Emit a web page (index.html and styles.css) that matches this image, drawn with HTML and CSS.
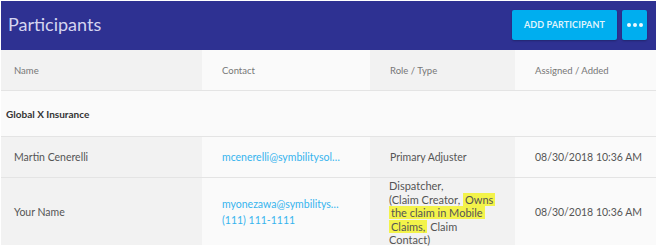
FILE: index.html
```html
<!DOCTYPE html>
<html lang="en">
<head>
    <meta charset="UTF-8">
    <title>Participants</title>
    <link rel="stylesheet" href="styles.css">
</head>
<body>
    <div class="panel">
        <div class="panel-header">
            <h1>Participants</h1>
            <div class="actions">
                <button class="btn-add">ADD PARTICIPANT</button>
                <button class="btn-more"><span></span><span></span><span></span></button>
            </div>
        </div>

        <div class="row head">
            <div class="cell c-name">Name</div>
            <div class="cell c-contact">Contact</div>
            <div class="cell c-role">Role / Type</div>
            <div class="cell c-date">Assigned / Added</div>
        </div>

        <div class="group">Global X Insurance</div>

        <div class="row">
            <div class="cell c-name">Martin Cenerelli</div>
            <div class="cell c-contact"><a class="link">mcenerelli@symbilitysolutions.com</a></div>
            <div class="cell c-role">Primary Adjuster</div>
            <div class="cell c-date">08/30/2018 10:36 AM</div>
        </div>

        <div class="row tall">
            <div class="cell c-name">Your Name</div>
            <div class="cell c-contact">
                <a class="link">myonezawa@symbilitysolutions.com</a>
                <a class="link">(111) 111-1111</a>
            </div>
            <div class="cell c-role">Dispatcher,<br>(Claim Creator, <mark>Owns the claim in Mobile Claims,</mark> Claim Contact)</div>
            <div class="cell c-date">08/30/2018 10:36 AM</div>
        </div>
    </div>
</body>
</html>
```

FILE: styles.css
```css
* {
    margin: 0;
    padding: 0;
    box-sizing: border-box;
}

body {
    font-family: 'Lato', 'Open Sans', sans-serif;
    background: #fff;
    color: #555;
    width: 658px;
    height: 250px;
    overflow: hidden;
}

.panel {
    margin: 1px 2px 0 1px;
    background: #fafafa;
}

.panel-header {
    background: #2e3192;
    height: 49px;
    display: flex;
    justify-content: space-between;
    align-items: center;
    padding: 0 9px 0 7px;
}

.panel-header h1 {
    font-size: 18px;
    font-weight: 400;
    color: #d4d5f0;
    margin-top: -3px;
}

.actions {
    display: flex;
    gap: 5px;
    margin-top: -2px;
}

.btn-add,
.btn-more {
    background: #00aeef;
    border: none;
    border-radius: 2px;
    height: 30px;
    color: #dff3fc;
    font-family: inherit;
    box-shadow: 0 1px 2px rgba(0, 0, 0, 0.25);
}

.btn-add {
    width: 105px;
    font-size: 9px;
    font-weight: 700;
    letter-spacing: 0.1px;
}

.btn-more {
    width: 25px;
    display: flex;
    justify-content: center;
    align-items: center;
    gap: 2px;
}

.btn-more span {
    width: 4px;
    height: 4px;
    border-radius: 50%;
    background: #eef9fe;
}

.row {
    display: grid;
    grid-template-columns: 201px 168px 145px 1fr;
    border-bottom: 1px solid #e4e4e4;
}

.row.tall {
    border-bottom: none;
}

.cell {
    display: flex;
    flex-direction: column;
    justify-content: center;
    padding: 0 20px;
    font-size: 10.5px;
    min-height: 40px;
}

.cell.c-name {
    padding-left: 13px;
}

.cell.c-date {
    padding-right: 0;
    white-space: nowrap;
}

.c-name,
.c-role {
    background: #f2f2f2;
}

.head .cell {
    height: 40px;
    font-size: 9.5px;
    color: #777;
}

.group {
    height: 46px;
    display: flex;
    align-items: center;
    padding-left: 5px;
    font-size: 10px;
    font-weight: 700;
    color: #333;
    border-bottom: 1px solid #e4e4e4;
}

.link {
    color: #36b4ee;
    display: block;
    max-width: 122px;
    white-space: nowrap;
    overflow: hidden;
    text-overflow: ellipsis;
}

.tall .cell {
    height: 67px;
}

.tall .c-contact {
    gap: 4px;
}

.tall .c-role {
    display: block;
    padding: 1px 16px 0 19px;
    font-size: 11px;
    line-height: 13.5px;
}

mark {
    background: #f3f34a;
    color: #555;
    padding: 0 2px;
    -webkit-box-decoration-break: clone;
    box-decoration-break: clone;
}
```
